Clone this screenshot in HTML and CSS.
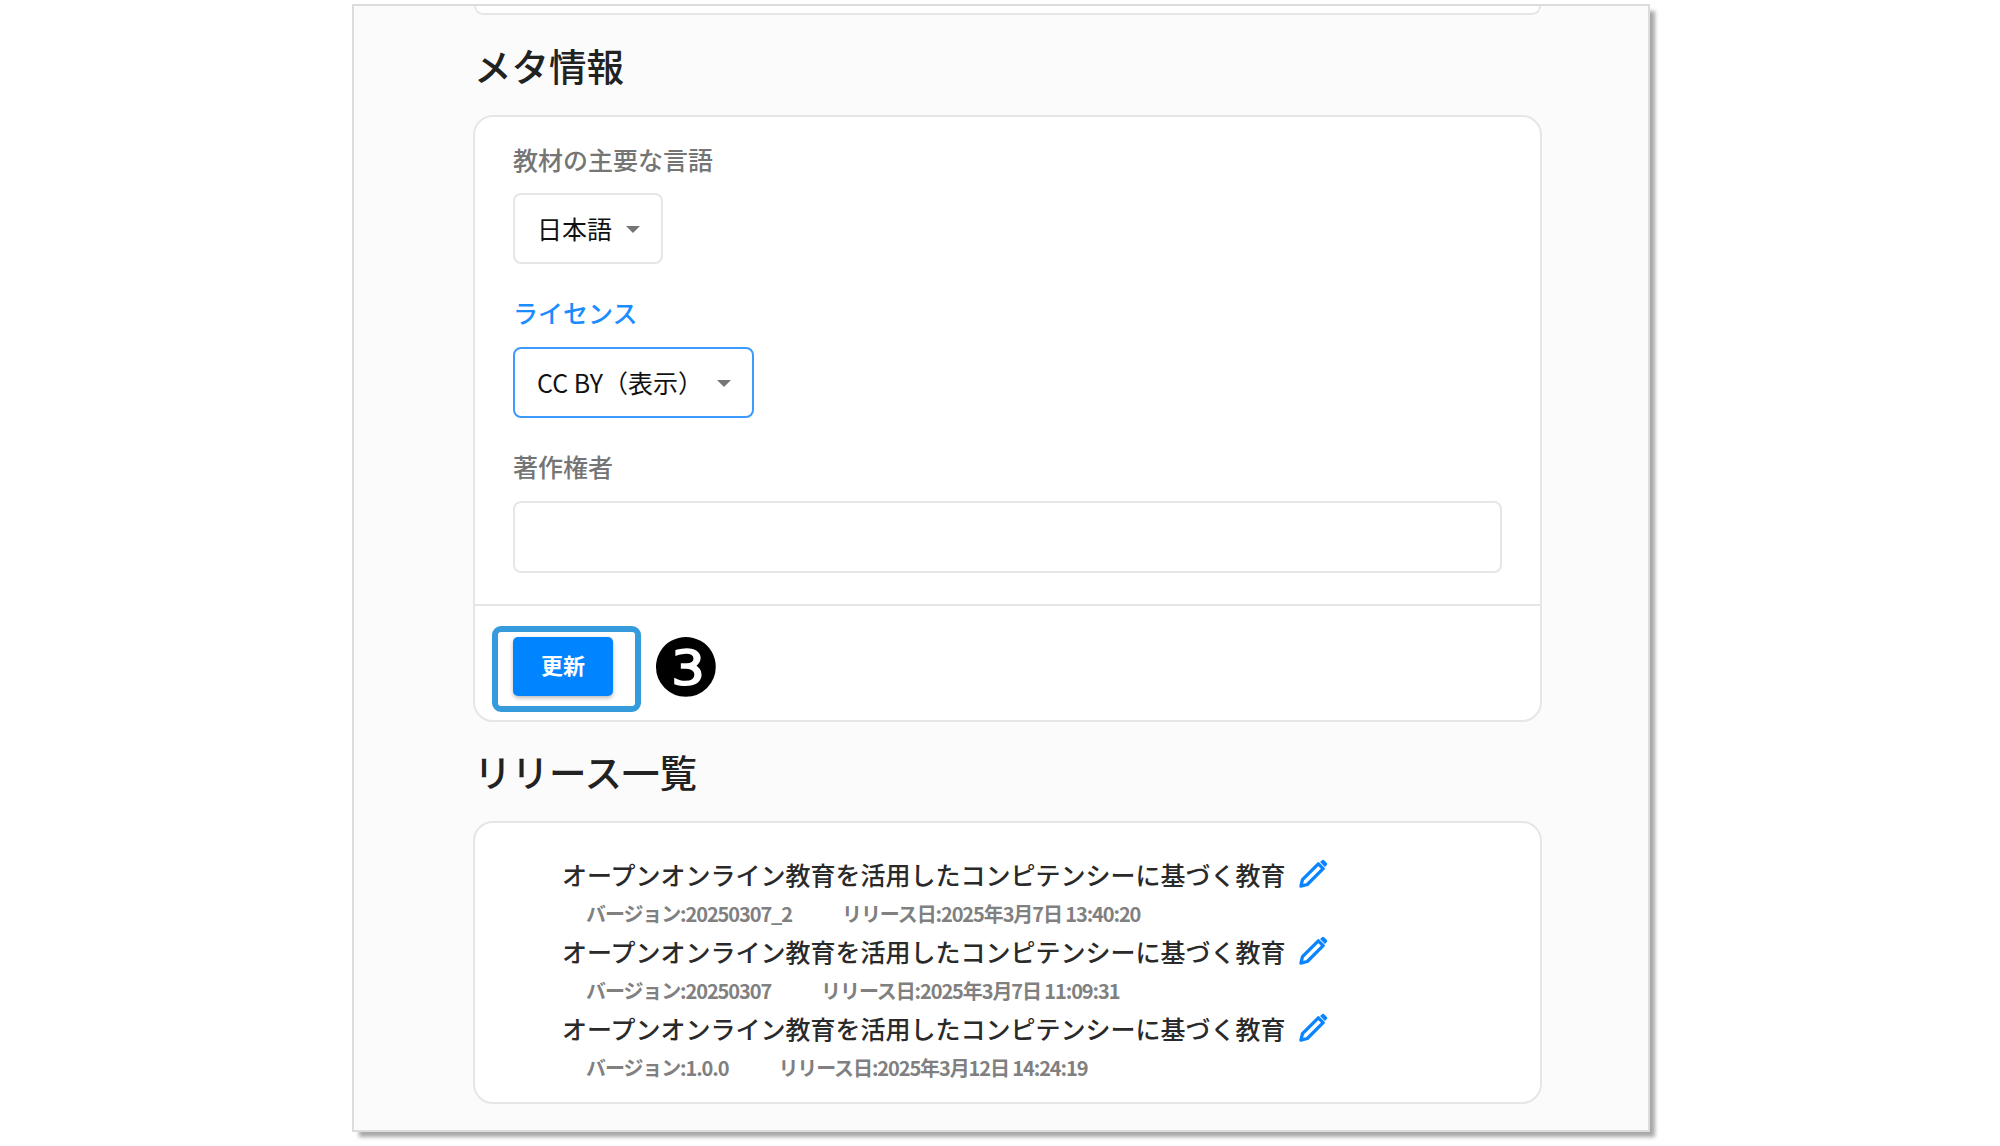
FILE: index.html
```html
<!DOCTYPE html>
<html lang="ja">
<head>
<meta charset="utf-8">
<title>メタ情報</title>
<link rel="stylesheet" href="styles.css">
</head>
<body>
<main class="frame">
  <div class="sliver"></div>
  <h2 class="heading heading-meta">メタ情報</h2>
  <section class="card">
    <div class="card-body">
      <label class="label">教材の主要な言語</label>
      <div class="select select-lang"><span class="select-text">日本語</span><i class="caret"></i></div>
      <label class="label label-active">ライセンス</label>
      <div class="select select-license"><span class="select-text">CC BY（表示）</span><i class="caret"></i></div>
      <label class="label label-owner">著作権者</label>
      <div class="input"></div>
    </div>
    <div class="card-actions">
      <div class="highlight"><button class="btn">更新</button></div>
      <span class="marker">❸</span>
    </div>
  </section>
  <h2 class="heading heading-rel">リリース一覧</h2>
  <section class="card release-card">
    <div class="release">
      <div class="rel-title"><span>オープンオンライン教育を活用したコンピテンシーに基づく教育</span>
        <svg class="pencil" viewBox="0 0 30 30"><path d="M2 28l1.6-6.6L20 5l5 5L8.600 26.400z" fill="none" stroke="#0a84ff" stroke-width="3.400" stroke-linejoin="round"/><path d="M21.800 3.200l2-2a1.500 1.500 0 0 1 2.100 0l2.900 2.900a1.500 1.500 0 0 1 0 2.100l-2 2z" fill="#0a84ff"/></svg></div>
      <div class="rel-meta"><span>バージョン:20250307_2</span><span>リリース日:2025年3月7日 13:40:20</span></div>
    </div>
    <div class="release">
      <div class="rel-title"><span>オープンオンライン教育を活用したコンピテンシーに基づく教育</span>
        <svg class="pencil" viewBox="0 0 30 30"><path d="M2 28l1.6-6.6L20 5l5 5L8.600 26.400z" fill="none" stroke="#0a84ff" stroke-width="3.400" stroke-linejoin="round"/><path d="M21.800 3.200l2-2a1.500 1.500 0 0 1 2.100 0l2.900 2.900a1.500 1.500 0 0 1 0 2.100l-2 2z" fill="#0a84ff"/></svg></div>
      <div class="rel-meta"><span>バージョン:20250307</span><span>リリース日:2025年3月7日 11:09:31</span></div>
    </div>
    <div class="release">
      <div class="rel-title"><span>オープンオンライン教育を活用したコンピテンシーに基づく教育</span>
        <svg class="pencil" viewBox="0 0 30 30"><path d="M2 28l1.6-6.6L20 5l5 5L8.600 26.400z" fill="none" stroke="#0a84ff" stroke-width="3.400" stroke-linejoin="round"/><path d="M21.800 3.200l2-2a1.500 1.500 0 0 1 2.100 0l2.900 2.900a1.500 1.500 0 0 1 0 2.100l-2 2z" fill="#0a84ff"/></svg></div>
      <div class="rel-meta"><span>バージョン:1.0.0</span><span>リリース日:2025年3月12日 14:24:19</span></div>
    </div>
  </section>
</main>
</body>
</html>
```
FILE: styles.css
```css
* { box-sizing: border-box; }
html, body { margin: 0; padding: 0; background: #fff; }
body {
  width: 2000px;
  height: 1146px;
  overflow: hidden;
  padding: 4px 0 0 352px;
  font-family: "Noto Sans CJK JP", "Noto Sans", sans-serif;
  color: #212121;
}
.frame {
  width: 1298px;
  height: 1128px;
  background: #fbfbfb;
  border: 2px solid #dcdcdc;
  box-shadow: 6px 6px 4px -1px #a8a8a8;
  padding: 0 106px 0 119px;
  display: flex;
  flex-direction: column;
}
.sliver {
  height: 9px;
  flex: none;
  background: #fff;
  border: 2px solid #e6e6e6;
  border-top: 0;
  border-radius: 0 0 16px 16px;
  margin: 0 1px;
}
.heading {
  margin: 0;
  font-size: 37.5px;
  line-height: 52px;
  font-weight: 500;
  color: #222;
  padding-left: 1px;
}
.heading-meta { margin-top: 24px; margin-bottom: 24px; }
.heading-rel { margin-top: 23px; margin-bottom: 24px; }
.card {
  flex: none;
  background: #fff;
  border: 2px solid #e6e6e6;
  border-radius: 20px;
}
.card-body {
  padding: 24px 37px 31px 38px;
  display: flex;
  flex-direction: column;
  align-items: flex-start;
  border-bottom: 2px solid #e6e6e6;
}
.label {
  font-size: 25px;
  line-height: 36px;
  font-weight: 500;
  color: #757575;
  margin-bottom: 16px;
}
.label-active { color: #1a8cff; margin-top: 30px; margin-bottom: 17px; }
.label-owner { margin-top: 30px; margin-bottom: 17px; }
.select {
  height: 71px;
  background: #fff;
  border: 2px solid #e6e6e6;
  border-radius: 8px;
  display: flex;
  align-items: center;
  justify-content: space-between;
  padding: 0 21px 0 22px;
  font-size: 25px;
  color: #111;
  white-space: nowrap;
}
.select-text { padding-bottom: 2px; }
.select-lang { width: 150px; }
.select-license { width: 241px; border-color: #3d9bff; }
.caret {
  width: 0; height: 0; flex: none;
  margin-top: 2px;
  border-left: 7.5px solid transparent;
  border-right: 7.5px solid transparent;
  border-top: 7.5px solid #757575;
}
.input {
  width: 989px;
  height: 72px;
  background: #fff;
  border: 2px solid #e6e6e6;
  border-radius: 8px;
}
.card-actions {
  height: 114px;
  padding: 20px 0 0 17px;
  display: flex;
  align-items: flex-start;
  gap: 9px;
}
.highlight {
  width: 149px;
  height: 86px;
  border: 6px solid #359bdc;
  border-radius: 9px;
  padding: 5px 0 0 15px;
}
.btn {
  display: block;
  width: 100px;
  height: 59px;
  padding: 0 0 5px;
  border: 0;
  border-radius: 5px;
  background: #0084ff;
  color: #fff;
  font-family: inherit;
  font-size: 22px;
  font-weight: 700;
  box-shadow: 0 2px 4px rgba(0,0,0,.28);
}
.marker {
  font-family: "DejaVu Sans", sans-serif;
  font-size: 80px;
  line-height: 85px;
  color: #000;
}
.release-card {
  height: 283px;
  padding: 31px 0 0 87px;
  display: flex;
  flex-direction: column;
}
.release { height: 77px; flex: none; }
.rel-title {
  display: flex;
  align-items: center;
  gap: 13px;
  height: 39px;
  font-size: 25px;
  font-weight: 500;
  color: #2a2a2a;
}
.pencil { width: 29px; height: 29px; flex: none; margin-top: 0; }
.rel-meta {
  display: flex;
  gap: 50px;
  padding-left: 24px;
  height: 38px;
  padding-top: 2px;
  align-items: center;
  font-size: 20px;
  font-weight: 700;
  color: #808080;
  letter-spacing: -1.1px;
}
```
